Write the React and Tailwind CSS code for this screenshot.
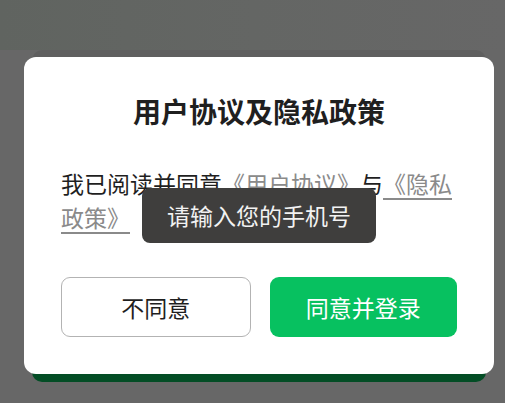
export default function App() {
  return (
    <div className="h-[403px] w-[505px] overflow-hidden bg-[#676767] font-['Noto_Sans_CJK_SC','Noto_Sans',sans-serif]">
      <div className="h-[50px] bg-linear-to-r from-[#606460] via-[#646664] to-[#676767]" />
      {/* card underneath the overlay */}
      <div className="relative ml-[32px] h-[332px] w-[454px] rounded-[10px] bg-linear-to-b from-[#5f5f5f] from-50% to-[#034d25] to-50%">
        <div className="absolute left-[-8px] top-[7px] flex h-[317px] w-[470px] flex-col rounded-[12px] bg-white px-[37px] pt-[36px] pb-[37px]">
          <h2 className="text-center text-[28px] font-bold leading-[36px] text-[#1f1f1f]">
            用户协议及隐私政策
          </h2>
          <p className="mt-[37px] text-[23px] leading-[34px] text-[#1f1f1f]">
            我已阅读并同意<a className="text-[#8a8a8a] underline underline-offset-[5px] decoration-[1.5px]">《用户协议》</a>与<a className="text-[#8a8a8a] underline underline-offset-[5px] decoration-[1.5px]">《隐私政策》</a>
          </p>
          <div className="mt-auto flex gap-[19px]">
            <button className="flex h-[60px] flex-1 items-center justify-center rounded-[9px] border-[1.5px] border-[#b3b3b3] bg-white text-[23px] text-[#1f1f1f]">
              不同意
            </button>
            <button className="flex h-[60px] flex-1 items-center justify-center rounded-[9px] bg-[#07c160] text-[23px] text-white">
              同意并登录
            </button>
          </div>
          <div className="absolute left-1/2 top-[131px] flex h-[55px] w-[234px] -translate-x-1/2 items-center justify-center rounded-[8px] bg-[#3f3e3d] text-[23px] text-[#f2f2f2]">
            请输入您的手机号
          </div>
        </div>
      </div>
    </div>
  );
}
